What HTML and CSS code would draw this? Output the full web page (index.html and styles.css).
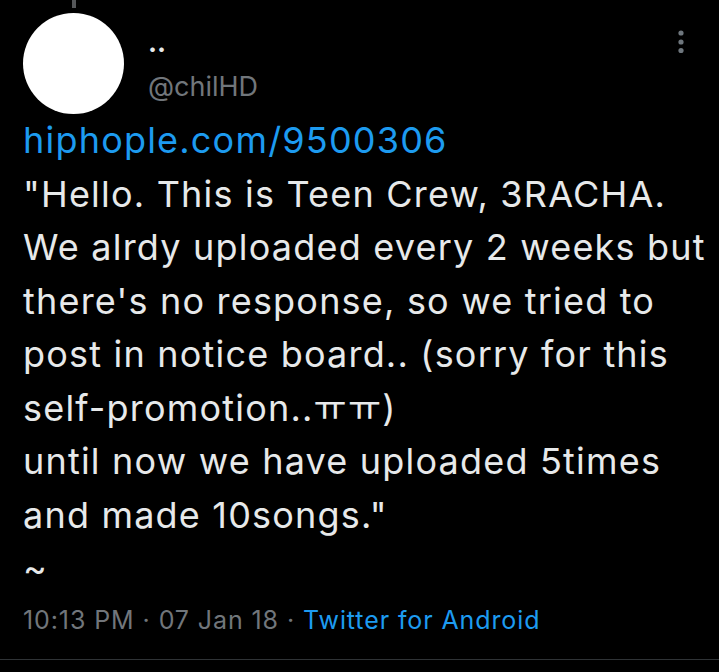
FILE: index.html
```html
<!DOCTYPE html>
<html lang="en">
<head>
    <meta charset="UTF-8">
    <meta name="viewport" content="width=device-width, initial-scale=1.0">
    <title>Tweet - @chilHD</title>
    <link rel="stylesheet" href="styles.css">
</head>
<body>
    <article class="tweet">
        <div class="tweet-header">
            <div class="avatar-col">
                <div class="thread-line"></div>
                <div class="avatar"></div>
            </div>
            <div class="user-info">
                <span class="user-name">..</span>
                <span class="user-handle">@chilHD</span>
            </div>
            <button class="more-btn" aria-label="More">
                <svg width="10" height="26" viewBox="0 0 10 26">
                    <circle cx="5" cy="4" r="2.6" fill="currentColor"></circle>
                    <circle cx="5" cy="13" r="2.6" fill="currentColor"></circle>
                    <circle cx="5" cy="21.5" r="2.6" fill="currentColor"></circle>
                </svg>
            </button>
        </div>
        <div class="tweet-text"><a href="#" class="link">hiphople.com/9500306</a>
"Hello. This is Teen Crew, 3RACHA. We alrdy uploaded every 2 weeks but there's no response, so we tried to post in notice board.. (sorry for this self-promotion..ㅠㅠ)
until now we have uploaded 5times and made 10songs."
~</div>
        <div class="tweet-meta">
            <span>10:13 PM</span>
            <span class="dot">·</span>
            <span>07 Jan 18</span>
            <span class="dot">·</span>
            <a href="#" class="link">Twitter for Android</a>
        </div>
    </article>
</body>
</html>
```

FILE: styles.css
```css
body, html {
    font-family: Inter, "Noto Sans CJK KR", sans-serif;
    background-color: #000000;
    color: #e7e9ea;
    margin: 0;
    padding: 0;
    height: 100%;
}
.tweet {
    padding-left: 23px;
    border-bottom: 1px solid #2f3336;
    padding-bottom: 24px;
}
.tweet-header {
    display: flex;
    align-items: flex-start;
    padding-right: 20px;
}
.avatar-col {
    display: flex;
    flex-direction: column;
    align-items: center;
    width: 101px;
}
.thread-line {
    width: 4px;
    height: 8px;
    background-color: #555759;
    margin-bottom: 5px;
}
.avatar {
    width: 101px;
    height: 101px;
    border-radius: 50%;
    background-color: #ffffff;
}
.user-info {
    flex-grow: 1;
    display: flex;
    flex-direction: column;
    margin-left: 24px;
    padding-top: 21px;
}
.user-name {
    font-size: 27px;
    font-weight: bold;
    color: #e7e9ea;
    line-height: 44px;
}
.user-handle {
    font-size: 27px;
    color: #71767b;
    line-height: 44px;
}
.more-btn {
    background: none;
    border: none;
    padding: 0;
    margin-top: 29px;
    margin-right: 13px;
    color: #6e767d;
    cursor: pointer;
}
.more-btn svg {
    display: block;
}
.tweet-text {
    font-size: 36px;
    line-height: 53.5px;
    letter-spacing: 1.2px;
    white-space: pre-line;
    padding-right: 10px;
    margin-top: 0;
}
.link {
    color: #1d9bf0;
    text-decoration: none;
}
.tweet-meta {
    font-size: 25px;
    letter-spacing: 0.9px;
    color: #71767b;
    margin-top: 9px;
    display: flex;
    gap: 8px;
}
.dot {
    color: #71767b;
}
```
